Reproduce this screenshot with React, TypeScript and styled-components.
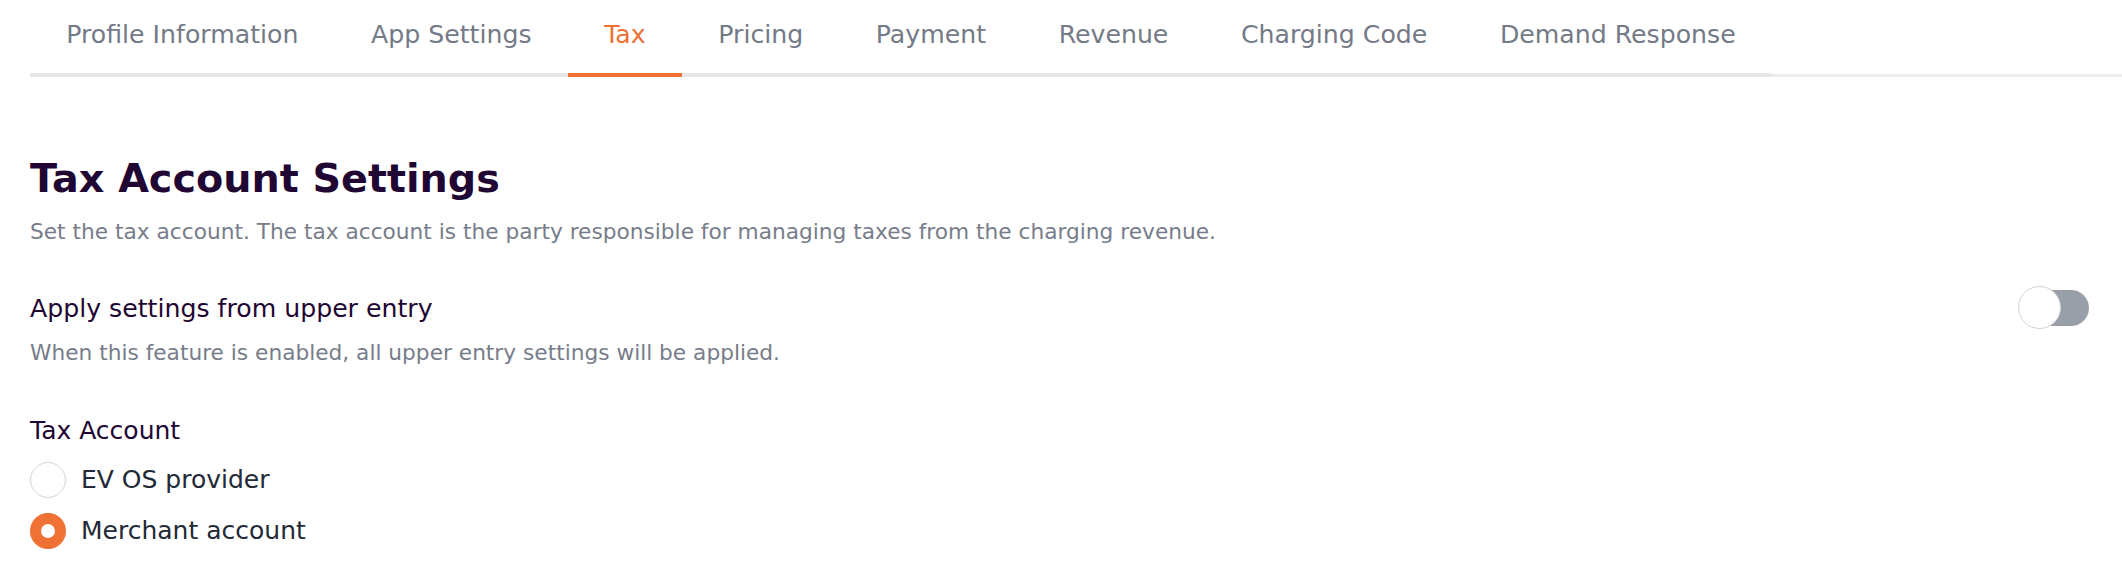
import React, { useState } from "react";
import styled, { createGlobalStyle } from "styled-components";

const GlobalStyle = createGlobalStyle`
  html, body {
    margin: 0;
    padding: 0;
    background: #ffffff;
  }
  body {
    font-family: "DejaVu Sans", Verdana, sans-serif;
  }
  * {
    box-sizing: border-box;
  }
`;

const Page = styled.div`
  padding: 0 31px 40px 30px;
  background: #ffffff;
`;

const TabBar = styled.nav`
  display: flex;
  margin-right: -31px;
  border-bottom: 3px solid #ededed;
`;

const Tab = styled.button<{ $active?: boolean }>`
  appearance: none;
  background: none;
  border: none;
  border-bottom: 4px solid ${(p) => (p.$active ? "#ef7133" : "#e6e6e6")};
  margin-bottom: -3px;
  padding: 20px 36.3px 23px;
  font-family: "DejaVu Sans", Verdana, sans-serif;
  font-size: 25.2px;
  line-height: 30px;
  color: ${(p) => (p.$active ? "#ef7133" : "#747a87")};
  cursor: pointer;
  white-space: nowrap;
`;

const Title = styled.h1`
  margin: 78px 0 0;
  font-size: 39.7px;
  line-height: 47px;
  font-weight: 700;
  color: #1f0633;
`;

const Hint = styled.p<{ $top?: number }>`
  margin: ${(p) => p.$top ?? 0}px 0 0;
  font-size: 21.7px;
  line-height: 32.5px;
  color: #777d8a;
`;

const SettingRow = styled.div`
  display: flex;
  align-items: center;
  justify-content: space-between;
  margin-top: 41px;
`;

const Label = styled.div`
  font-size: 25.2px;
  line-height: 37.5px;
  color: #1f0633;
`;

const Switch = styled.button`
  position: relative;
  appearance: none;
  width: 73px;
  height: 43px;
  padding: 0;
  border: none;
  background: none;
  cursor: pointer;
  margin-top: -4px;
`;

const Track = styled.span<{ $on: boolean }>`
  position: absolute;
  left: 1px;
  right: 2px;
  top: 4px;
  height: 36px;
  border-radius: 18px;
  background: ${(p) => (p.$on ? "#ef7133" : "#999fa8")};
`;

const Knob = styled.span<{ $on: boolean }>`
  position: absolute;
  top: 0;
  left: ${(p) => (p.$on ? "30px" : "0")};
  width: 43px;
  height: 43px;
  border-radius: 50%;
  background: #ffffff;
  border: 1.5px solid #d3d3d3;
`;

const GroupLabel = styled(Label)`
  margin-top: 43px;
  font-size: 25px;
`;

const RadioList = styled.div`
  display: flex;
  flex-direction: column;
  gap: 13px;
  margin-top: 11px;
`;

const RadioRow = styled.label`
  display: flex;
  align-items: center;
  gap: 15px;
  height: 38px;
  cursor: pointer;
`;

const RadioDot = styled.span<{ $checked: boolean }>`
  width: 36px;
  height: 36px;
  flex: none;
  border-radius: 50%;
  background: #ffffff;
  border: ${(p) => (p.$checked ? "11.5px solid #ef7133" : "1.5px solid #d6d6d6")};
`;

const RadioText = styled.span`
  font-size: 25px;
  line-height: 37.5px;
  color: #232936;
`;

const tabs = [
  "Profile Information",
  "App Settings",
  "Tax",
  "Pricing",
  "Payment",
  "Revenue",
  "Charging Code",
  "Demand Response",
];

const accounts = ["EV OS provider", "Merchant account"];

export default function App() {
  const [active, setActive] = useState("Tax");
  const [inherit, setInherit] = useState(false);
  const [account, setAccount] = useState("Merchant account");

  return (
    <>
      <GlobalStyle />
      <Page>
        <TabBar>
          {tabs.map((t) => (
            <Tab key={t} $active={t === active} onClick={() => setActive(t)}>
              {t}
            </Tab>
          ))}
        </TabBar>

        <Title>Tax Account Settings</Title>
        <Hint $top={14}>
          Set the tax account. The tax account is the party responsible for managing taxes from the charging revenue.
        </Hint>

        <SettingRow>
          <Label>Apply settings from upper entry</Label>
          <Switch onClick={() => setInherit(!inherit)} aria-pressed={inherit}>
            <Track $on={inherit} />
            <Knob $on={inherit} />
          </Switch>
        </SettingRow>
        <Hint $top={8}>When this feature is enabled, all upper entry settings will be applied.</Hint>

        <GroupLabel>Tax Account</GroupLabel>
        <RadioList>
          {accounts.map((a) => (
            <RadioRow key={a} onClick={() => setAccount(a)}>
              <RadioDot $checked={account === a} />
              <RadioText>{a}</RadioText>
            </RadioRow>
          ))}
        </RadioList>
      </Page>
    </>
  );
}
